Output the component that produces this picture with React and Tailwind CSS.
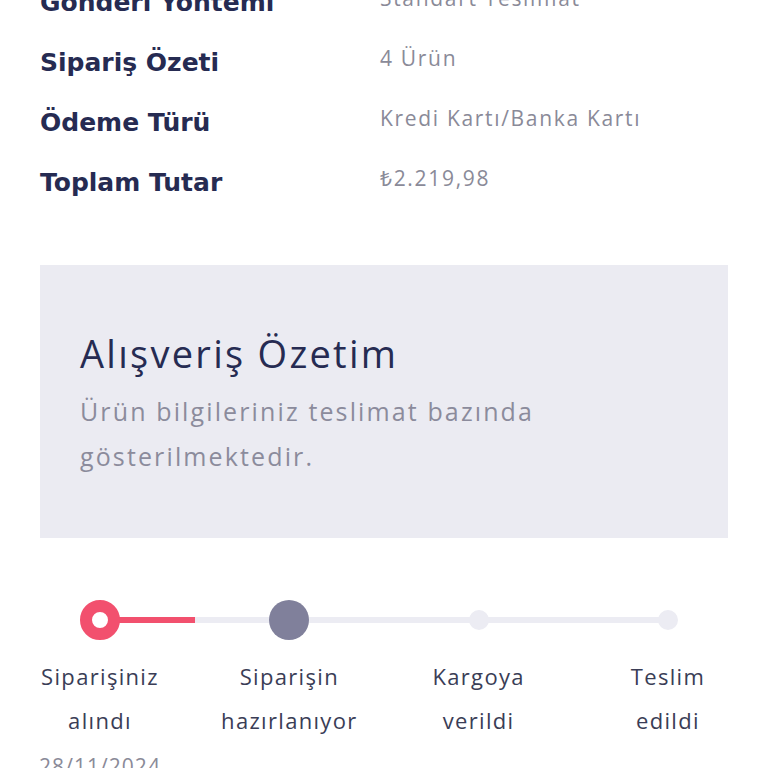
import React from "react";

const rows = [
  { label: "Gönderi Yöntemi", value: "Standart Teslimat" },
  { label: "Sipariş Özeti", value: "4 Ürün" },
  { label: "Ödeme Türü", value: "Kredi Kartı/Banka Kartı" },
  { label: "Toplam Tutar", value: "₺2.219,98" },
];

const steps = [
  { lines: ["Siparişiniz", "alındı"], date: "28/11/2024", state: "done" },
  { lines: ["Siparişin", "hazırlanıyor"], state: "current" },
  { lines: ["Kargoya", "verildi"], state: "todo" },
  { lines: ["Teslim", "edildi"], state: "todo" },
];

const StepDot = ({ state }) => {
  if (state === "done") {
    return <div className="w-10 h-10 rounded-full border-[12px] border-[#f2506e] bg-white" />;
  }
  if (state === "current") {
    return <div className="w-10 h-10 rounded-full bg-[#80809b]" />;
  }
  return <div className="w-5 h-5 rounded-full bg-[#ececf3]" />;
};

export default function App() {
  return (
    <div className="w-[768px] h-[768px] overflow-hidden bg-white font-['Open_Sans',sans-serif]">
      <div className="px-10 -mt-[27px]">
        {rows.map((r) => (
          <div key={r.label} className="flex h-[60px] items-center">
            <div className="w-[340px] text-[25px] font-bold text-[#262b52] font-['DejaVu_Sans',sans-serif]">
              {r.label}
            </div>
            <div className="-mt-[9px] text-[21px] tracking-[0.08em] text-[#8a8a98]">{r.value}</div>
          </div>
        ))}
      </div>

      <div className="mx-10 mt-[52px] h-[273px] bg-[#ebebf2] px-10 pt-[62px]">
        <h2 className="text-[38px] leading-[52px] tracking-[0.06em] text-[#262b52]">
          Alışveriş Özetim
        </h2>
        <p className="mt-[10px] text-[25px] leading-[45px] tracking-[0.085em] text-[#8b8b9c] w-[580px]">
          Ürün bilgileriniz teslimat bazında gösterilmektedir.
        </p>
      </div>

      <div className="relative mx-10 mt-[62px]">
        <div className="absolute left-[60px] right-[60px] top-[17px] h-[6px] bg-[#ececf3]" />
        <div className="absolute left-[60px] w-[95px] top-[17px] h-[6px] bg-[#f2506e]" />
        <div className="relative flex justify-between">
          {steps.map((s, i) => (
            <div key={i} className="w-[120px] flex flex-col items-center">
              <div className="h-10 flex items-center justify-center">
                <StepDot state={s.state} />
              </div>
              <div className="mt-[14px] text-center text-[22px] leading-[44px] tracking-[0.06em] text-[#3a3d56] whitespace-nowrap">
                {s.lines.map((l) => (
                  <div key={l}>{l}</div>
                ))}
              </div>
              {s.date && (
                <div className="mt-[9px] text-[21px] leading-[30px] tracking-[0.05em] text-[#8a8a98] whitespace-nowrap">
                  {s.date}
                </div>
              )}
            </div>
          ))}
        </div>
      </div>
    </div>
  );
}
